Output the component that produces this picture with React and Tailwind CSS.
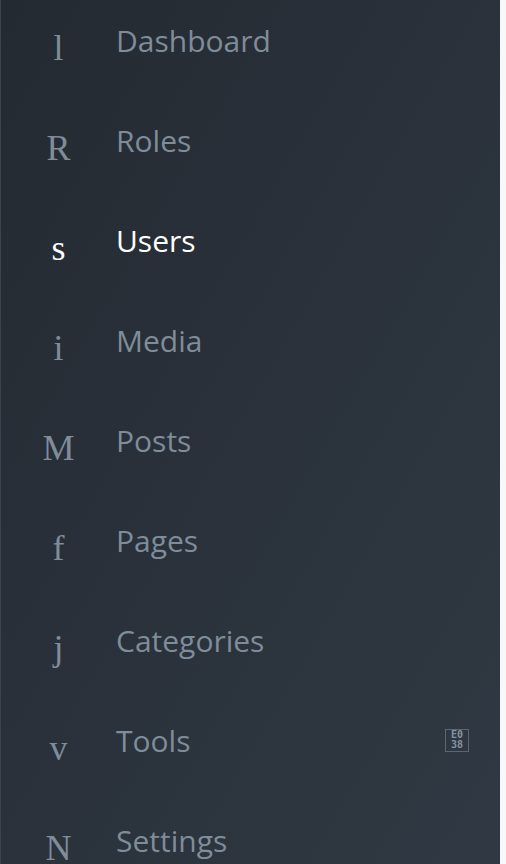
import React from "react";

const items = [
  { icon: "l", label: "Dashboard" },
  { icon: "R", label: "Roles" },
  { icon: "s", label: "Users", active: true },
  { icon: "i", label: "Media" },
  { icon: "M", label: "Posts" },
  { icon: "f", label: "Pages" },
  { icon: "j", label: "Categories" },
  { icon: "v", label: "Tools", badge: true },
  { icon: "N", label: "Settings" },
];

export default function App() {
  return (
    <div className="flex w-[506px] h-[864px] overflow-hidden bg-[#f7f8f9]">
      <nav className="w-[500px] h-full border-l border-[#3b444e] bg-gradient-to-br from-[#242a32] to-[#303943] overflow-hidden">
        <ul className="-mt-[10px]">
          {items.map((it) => (
            <li key={it.label} className="flex items-center h-[100px]">
              <span
                className={`w-[115px] text-center text-[36px] leading-[41px] translate-y-[8px] ${
                  it.active ? "text-white" : "text-[#7f8c99]"
                }`}
                style={{ fontFamily: '"Liberation Serif", "Times New Roman", serif' }}
              >
                {it.icon}
              </span>
              <span
                className={`flex-1 text-[30px] leading-[41px] ${
                  it.active ? "text-white" : "text-[#7f8c99]"
                }`}
                style={{ fontFamily: '"Open Sans", sans-serif' }}
              >
                {it.label}
              </span>
              {it.badge && (
                <span
                  className="mr-[31px] flex h-[23px] w-[24px] flex-col items-center justify-center border border-[#5b6673] text-[10px] font-bold leading-[10px] text-[#8593a0]"
                  style={{ fontFamily: '"DejaVu Sans Mono", monospace' }}
                >
                  <span>E0</span>
                  <span>38</span>
                </span>
              )}
            </li>
          ))}
        </ul>
      </nav>
    </div>
  );
}
